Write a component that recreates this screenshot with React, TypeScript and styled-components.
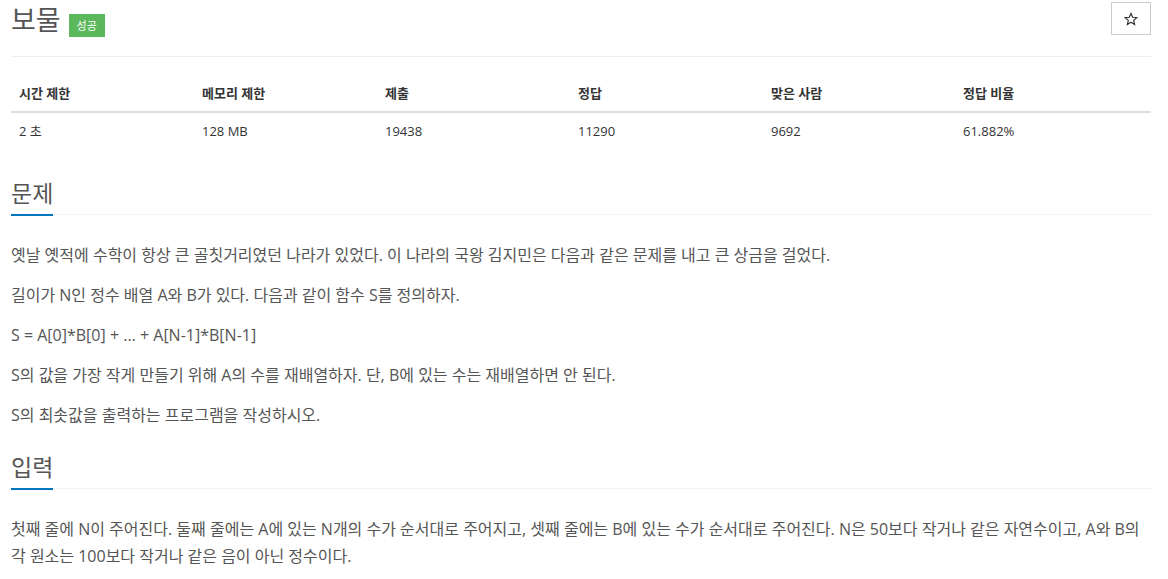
import React from 'react'
import styled, { createGlobalStyle } from 'styled-components'

const GlobalStyle = createGlobalStyle`
  body {
    margin: 0;
    background: #fff;
    font-family: 'Open Sans', 'Noto Sans CJK KR', sans-serif;
    color: #333;
  }
`

type StatType = {
  label: string
  value: string
  width: number
}

const stats: StatType[] = [
  { label: '시간 제한', value: '2 초', width: 183 },
  { label: '메모리 제한', value: '128 MB', width: 183 },
  { label: '제출', value: '19438', width: 193 },
  { label: '정답', value: '11290', width: 193 },
  { label: '맞은 사람', value: '9692', width: 192 },
  { label: '정답 비율', value: '61.882%', width: 196 },
]

type SectionType = {
  title: string
  paragraphs: string[]
}

const sections: SectionType[] = [
  {
    title: '문제',
    paragraphs: [
      '옛날 옛적에 수학이 항상 큰 골칫거리였던 나라가 있었다. 이 나라의 국왕 김지민은 다음과 같은 문제를 내고 큰 상금을 걸었다.',
      '길이가 N인 정수 배열 A와 B가 있다. 다음과 같이 함수 S를 정의하자.',
      'S = A[0]*B[0] + ... + A[N-1]*B[N-1]',
      'S의 값을 가장 작게 만들기 위해 A의 수를 재배열하자. 단, B에 있는 수는 재배열하면 안 된다.',
      'S의 최솟값을 출력하는 프로그램을 작성하시오.',
    ],
  },
  {
    title: '입력',
    paragraphs: [
      '첫째 줄에 N이 주어진다. 둘째 줄에는 A에 있는 N개의 수가 순서대로 주어지고, 셋째 줄에는 B에 있는 수가 순서대로 주어진다. N은 50보다 작거나 같은 자연수이고, A와 B의 각 원소는 100보다 작거나 같은 음이 아닌 정수이다.',
    ],
  },
]

function StarIcon() {
  return (
    <svg width="14" height="14" viewBox="0 0 24 24" fill="none" stroke="#333" strokeWidth="2" strokeLinejoin="miter">
      <path d="M12 2.5l2.9 6.6 7.1.6-5.4 4.7 1.6 7-6.2-3.8-6.2 3.8 1.6-7L2 9.7l7.1-.6z" />
    </svg>
  )
}

function Section(props: SectionType) {
  return (
    <StyledSection>
      <Headline>
        <HeadTitle>{props.title}</HeadTitle>
      </Headline>
      <Body>
        {props.paragraphs.map((p, i) => (
          <Paragraph key={i}>{p}</Paragraph>
        ))}
      </Body>
    </StyledSection>
  )
}

export default function App() {
  return (
    <Page>
      <GlobalStyle />
      <Header>
        <Title>보물</Title>
        <Badge>성공</Badge>
        <StarButton type="button">
          <StarIcon />
        </StarButton>
      </Header>
      <Table>
        <thead>
          <tr>
            {stats.map((s) => (
              <Th key={s.label} $w={s.width}>
                {s.label}
              </Th>
            ))}
          </tr>
        </thead>
        <tbody>
          <tr>
            {stats.map((s) => (
              <Td key={s.label}>{s.value}</Td>
            ))}
          </tr>
        </tbody>
      </Table>
      {sections.map((s) => (
        <Section key={s.title} title={s.title} paragraphs={s.paragraphs} />
      ))}
    </Page>
  )
}

const Page = styled.div`
  width: 1140px;
  padding-left: 11px;
`

const Header = styled.div`
  display: flex;
  align-items: flex-start;
  height: 54px;
  padding-top: 2px;
  border-bottom: 1px solid #eee;
`

const Title = styled.h1`
  margin: 0;
  font-size: 27px;
  line-height: 36px;
  font-weight: 400;
  color: #555;
`

const Badge = styled.span`
  margin: 12px 0 0 8px;
  width: 36px;
  height: 23px;
  background: #5cb85c;
  color: #fff;
  font-size: 11px;
  line-height: 23px;
  text-align: center;
`

const StarButton = styled.button`
  margin-left: auto;
  width: 40px;
  height: 33px;
  padding: 0;
  display: flex;
  align-items: center;
  justify-content: center;
  background: #fff;
  border: 1px solid #ccc;
  border-radius: 0;
`

const Table = styled.table`
  width: 1140px;
  margin: 18px 0 29px;
  border-collapse: collapse;
  table-layout: fixed;
  font-size: 13px;
`

const Th = styled.th<{ $w: number }>`
  box-sizing: border-box;
  width: ${(p) => p.$w}px;
  padding: 8px;
  line-height: 20px;
  text-align: left;
  font-weight: 700;
  color: #333;
  border-bottom: 2px solid #ddd;
`

const Td = styled.td`
  padding: 8px;
  line-height: 20px;
  color: #333;
`

const StyledSection = styled.section`
  margin-bottom: 23px;
`

const Headline = styled.div`
  display: flex;
  border-bottom: 1px dotted #e4e9f0;
`

const HeadTitle = styled.h2`
  margin: 0 0 -2px;
  padding-bottom: 6px;
  font-size: 23px;
  line-height: 30px;
  font-weight: 400;
  color: #555;
  border-bottom: 2px solid #0076c0;
`

const Body = styled.div`
  padding-top: 27px;
`

const Paragraph = styled.p`
  margin: 0 0 13px;
  font-size: 16px;
  line-height: 27px;
  color: #555;
`
